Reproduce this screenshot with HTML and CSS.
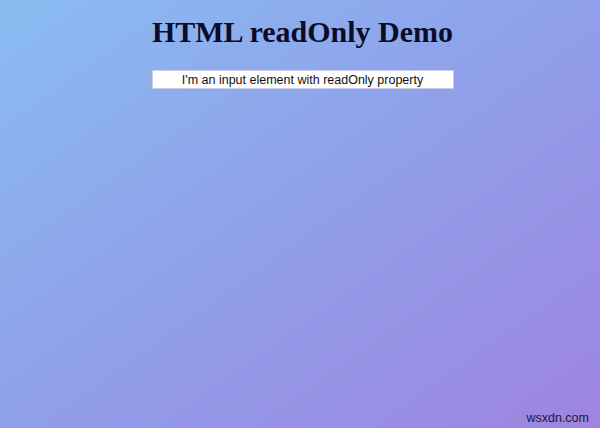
FILE: index.html
```html
<!DOCTYPE html>
<html>
<head>
<meta charset="utf-8">
<link rel="stylesheet" href="styles.css">
</head>
<body>
<main class="page">
  <h1 class="title">HTML readOnly Demo</h1>
  <input class="field" type="text" value="I'm an input element with readOnly property" readonly>
  <div class="watermark">wsxdn.com</div>
</main>
</body>
</html>
```
FILE: styles.css
```css
html, body {
  margin: 0;
  padding: 0;
  width: 600px;
  height: 428px;
  overflow: hidden;
}
.page {
  position: relative;
  width: 600px;
  height: 428px;
  box-sizing: border-box;
  background: linear-gradient(to bottom right, #8abcf1 0%, #909fea 50%, #9e84e0 100%);
  display: flex;
  flex-direction: column;
  align-items: center;
  padding-top: 14px;
  padding-left: 5px;
}
.title {
  margin: 0;
  font-family: "Liberation Serif", serif;
  font-weight: bold;
  font-size: 30px;
  line-height: 36px;
  color: #0b0b2a;
}
.field {
  margin-top: 20px;
  width: 302px;
  height: 19px;
  box-sizing: border-box;
  border: 1px solid #c9cde6;
  background: #fff;
  padding: 0 4px;
  font-family: "Liberation Sans", sans-serif;
  font-size: 12.5px;
  color: #111;
  text-align: center;
  outline: none;
}
.watermark {
  position: absolute;
  right: 11px;
  bottom: 3px;
  font-family: "Liberation Sans", sans-serif;
  font-size: 12.5px;
  color: #1a1a3a;
}
```
